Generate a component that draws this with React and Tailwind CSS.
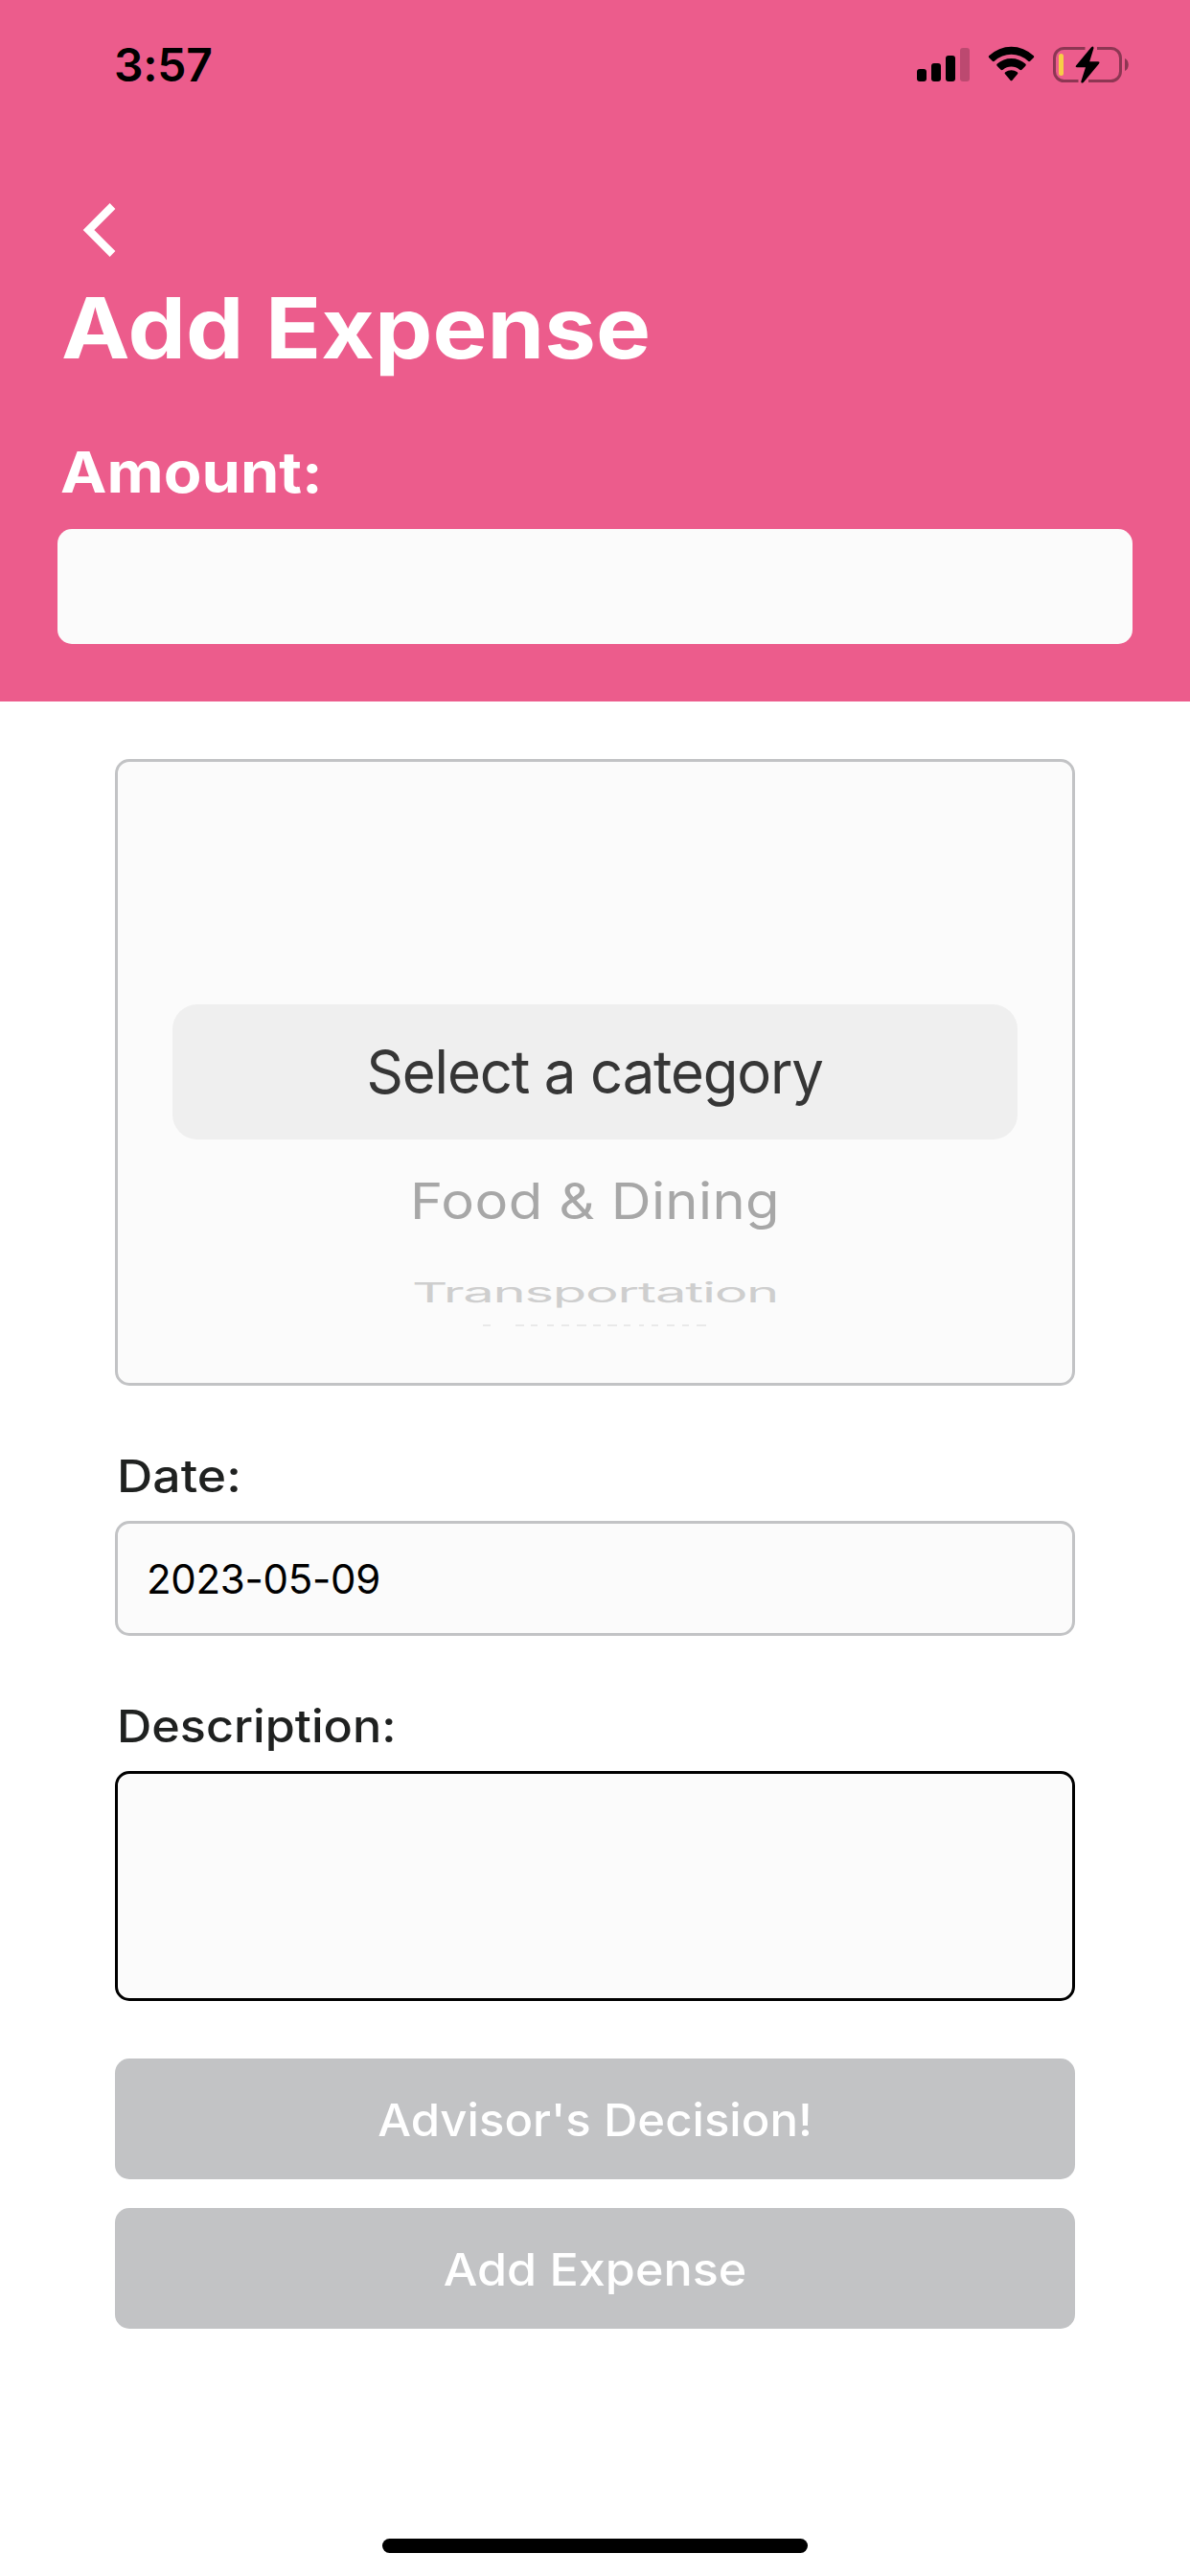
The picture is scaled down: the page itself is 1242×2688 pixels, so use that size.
import React from "react";

function StatusBar() {
  return (
    <div className="flex h-[135px] items-center pl-[119px] text-black">
      <span className="text-[48px] font-semibold leading-none tracking-[-0.3px]">3:57</span>
      <svg className="ml-auto mr-[62px] h-[45px] w-[224px]" viewBox="956 45 224 45" fill="none">
        <g fill="#000">
          <rect x="957" y="72" width="10" height="13" rx="3" />
          <rect x="972" y="66" width="10" height="19" rx="3" />
          <rect x="987" y="58" width="10" height="27" rx="3" />
          <rect x="1002" y="50" width="10" height="35" rx="3" opacity="0.2" />
          <path d="M1032.3 60.3 Q1031.2 59.2 1032.4 58 A33.5 33.5 0 0 1 1078.6 58 Q1079.8 59.2 1078.7 60.3 L1075.2 63.7 Q1074 64.7 1072.8 63.6 A25.5 25.5 0 0 0 1038.2 63.6 Q1037 64.7 1035.8 63.7 Z" />
          <path d="M1040.6 68.8 Q1039.6 67.7 1040.8 66.6 A22 22 0 0 1 1070.2 66.6 Q1071.4 67.7 1070.4 68.8 L1066.5 72.7 Q1065.4 73.6 1064.2 72.7 A13.5 13.5 0 0 0 1046.8 72.7 Q1045.6 73.6 1044.5 72.7 Z" />
          <path d="M1049 77.2 Q1048 76.2 1049.2 75.3 A10.5 10.5 0 0 1 1061.8 75.3 Q1063 76.2 1062 77.2 L1056.3 83.9 Q1055.5 84.8 1054.7 83.9 Z" />
        </g>
        <g opacity="0.4">
          <path d="M1132.5 50.5 H1110.5 A10 10 0 0 0 1100.5 60.5 V74.5 A10 10 0 0 0 1110.5 84.5 H1125.5" stroke="#000" strokeWidth="3" />
          <path d="M1145 50.5 H1159.5 A10 10 0 0 1 1169.5 60.5 V74.5 A10 10 0 0 1 1159.5 84.5 H1136" stroke="#000" strokeWidth="3" />
          <path d="M1174 61 C1179 63 1179 72 1174 74 Z" fill="#000" />
        </g>
        <rect x="1105" y="56" width="5" height="23" rx="2.5" fill="#f7ce46" />
        <path d="M1139 49.2 L1123 68.5 Q1122 70.2 1124 70.2 H1133 L1128.3 85 Q1128.2 87.5 1130.8 86 L1147 66.5 Q1148.4 64.3 1146 64.3 H1137.2 L1141.5 50.2 Q1141.4 47.3 1139 49.2 Z" fill="#000" />
      </svg>
    </div>
  );
}

function Label({ children, className }) {
  return (
    <label className="mt-16 block h-[60px] pl-[2px] text-[47px] font-medium leading-[60px] text-[#1f2120]">
      <span className={`inline-block origin-left ${className}`}>{children}</span>
    </label>
  );
}

function CategoryPicker() {
  return (
    <div className="h-[654px] rounded-[15px] border-[3px] border-[#c2c3c5] bg-[#fbfbfb] pt-[253px] text-center">
      <div className="mx-[57px] h-[141px] rounded-[26px] bg-[#efefef] text-[63px] leading-[141px] text-[#363636]">
        <span className="inline-block scale-x-95 tracking-[-1.2px]">Select a category</span>
      </div>
      <div className="mt-3.5 h-[100px] text-[58px] leading-[100px] text-[#a7a7a7]">
        <span className="inline-block scale-y-90 tracking-[0.38px]">Food &amp; Dining</span>
      </div>
      <div className="mt-[30px] h-[30px] text-[58px] leading-[30px]">
        <span className="inline-block scale-y-50 tracking-[-1.3px] text-[#cecece]">Transportation</span>
      </div>
      <svg className="mx-auto mt-[19px] h-[2px] w-[234px]" viewBox="0 0 234 2">
        <path
          d="M0 1h8M34 1h9M50 1h7M67 1h7M82 1h8M98 1h10M115 1h8M130 1h10M147 1h7M163 1h5M176 1h7M192 1h8M208 1h7M223 1h10"
          stroke="#e3e3e3"
          strokeWidth="1.5"
        />
      </svg>
    </div>
  );
}

function ActionButton({ children, className }) {
  return (
    <button className="flex h-[126px] w-full items-center justify-center rounded-[15px] bg-[#c2c3c5] pt-[2px] text-[47px] font-medium text-white">
      <span className={className}>{children}</span>
    </button>
  );
}

export default function App() {
  return (
    <div className="flex h-[2688px] w-[1242px] flex-col overflow-hidden bg-white font-['Inter',sans-serif]">
      <header className="h-[732px] bg-[#ec5c8c] text-white">
        <StatusBar />
        <div className="h-[153px] pl-[86px] pt-[77px]">
          <svg className="h-[56px] w-[36px]" viewBox="0 0 36 56" fill="none" stroke="#fff" strokeWidth="8.2">
            <path d="M31.5 3 L6.5 28 L31.5 53" />
          </svg>
        </div>
        <div className="px-[60px]">
          <h1 className="h-[108px] pl-[4px] text-[88px] font-bold leading-[108px]">
            <span className="inline-block origin-left scale-x-[1.09]">Add Expense</span>
          </h1>
          <label className="mt-[60px] block h-[73px] pl-[3px] text-[59px] font-bold leading-[73px]">
            <span className="inline-block origin-left scale-x-[1.1]">Amount:</span>
          </label>
          <div className="mt-[23px] h-[120px] rounded-[15px] bg-[#fbfbfb]" />
        </div>
      </header>
      <main className="grow px-[120px] pt-[60px]">
        <CategoryPicker />
        <Label className="scale-x-110">Date:</Label>
        <div className="mt-[17px] flex h-[120px] items-center rounded-[15px] border-[3px] border-[#c2c3c5] bg-[#fbfbfb] pl-[30px] text-[42px] tracking-[-0.3px] text-black">
          2023-05-09
        </div>
        <Label className="scale-x-[1.07]">Description:</Label>
        <div className="mt-[17px] h-[240px] rounded-[15px] border-[3px] border-black bg-[#fbfbfb]" />
        <div className="mt-[60px] flex flex-col gap-[30px]">
          <ActionButton className="scale-x-[1.045]">Advisor's Decision!</ActionButton>
          <ActionButton className="scale-x-[1.07]">Add Expense</ActionButton>
        </div>
      </main>
      <div className="mx-auto mb-6 h-[15px] w-[444px] rounded-full bg-black" />
    </div>
  );
}
